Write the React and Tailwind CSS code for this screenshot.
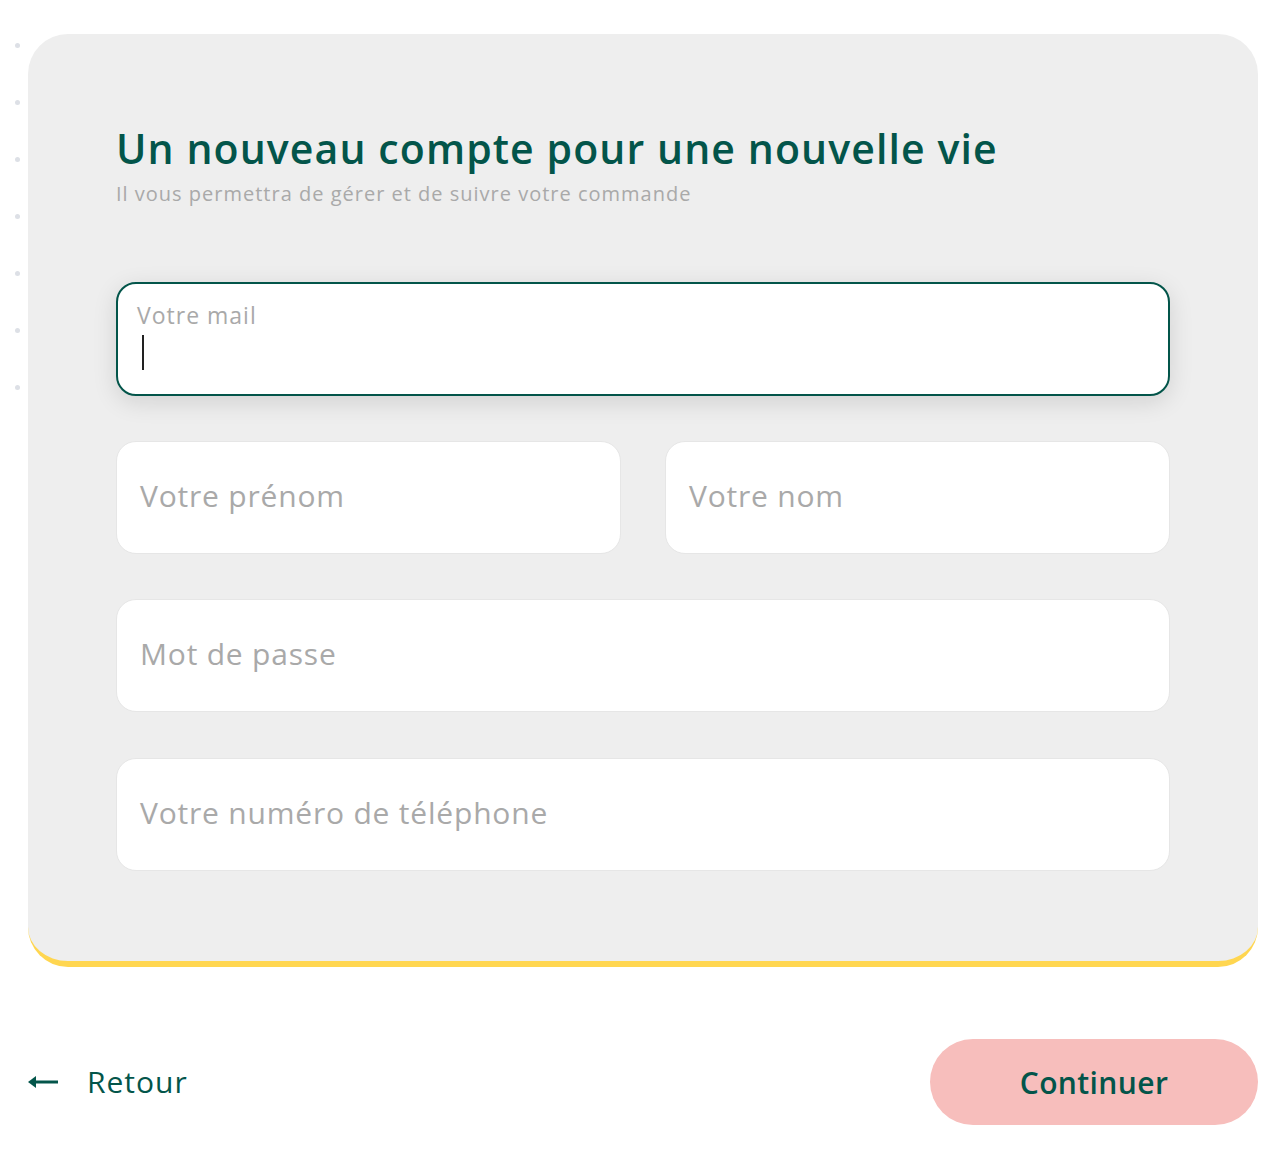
const Field = ({ placeholder, className = "" }) => {
  return (
    <div
      className={`h-[113px] rounded-[20px] bg-white border border-[#e6e6e6] flex items-center px-[23px] pb-[4px] ${className}`}
    >
      <span className="text-[30px] tracking-[0.8px] text-[#a9a9a9]">{placeholder}</span>
    </div>
  );
};

export default function App() {
  return (
    <div
      className="relative w-[1288px] h-[1170px] bg-white"
      style={{ fontFamily: "'Open Sans', 'Noto Sans', sans-serif" }}
    >
      {/* decorative dots */}
      <div className="absolute left-[15px] top-[43px] flex flex-col gap-[52px]">
        {[0, 1, 2, 3, 4, 5, 6].map((i) => (
          <span key={i} className="block w-[5px] h-[5px] rounded-full bg-[#dde0e6]" />
        ))}
      </div>

      <div className="pt-[34px] pl-[28px] pr-[30px]">
        {/* card */}
        <div className="rounded-[40px] bg-[#eeeeee] border-b-[6px] border-[#ffd650] px-[88px] pt-[87px] pb-[90px]">
          <h1 className="text-[41px] font-semibold tracking-[1.1px] text-[#03554a] leading-[54px]">
            Un nouveau compte pour une nouvelle vie
          </h1>
          <p className="text-[20px] tracking-[1px] text-[#a9a9a9] leading-[24px] mt-[7px]">
            Il vous permettra de gérer et de suivre votre commande
          </p>

          <div className="mt-[76px] h-[114px] rounded-[20px] bg-white border-2 border-[#03554a] shadow-[0_6px_24px_rgba(0,0,0,0.12)] px-[19px] pt-[16px]">
            <div className="text-[23px] tracking-[1px] text-[#a9a9a9] leading-[30px]">Votre mail</div>
            <div className="mt-[5px] ml-[5px] w-[2px] h-[35px] bg-[#222]" />
          </div>

          <div className="mt-[45px] grid grid-cols-2 gap-[44px]">
            <Field placeholder="Votre prénom" />
            <Field placeholder="Votre nom" />
          </div>

          <Field placeholder="Mot de passe" className="mt-[45px]" />
          <Field placeholder="Votre numéro de téléphone" className="mt-[46px]" />
        </div>

        {/* actions */}
        <div className="mt-[72px] flex items-center justify-between">
          <button className="flex items-center gap-[28px] text-[#03554a]">
            <svg width="31" height="14" viewBox="0 0 31 14" fill="none">
              <path d="M30 7H3" stroke="#03554a" strokeWidth="3" />
              <path d="M0 7L8 1V13Z" fill="#03554a" />
            </svg>
            <span className="text-[30px] tracking-[1px] leading-none">Retour</span>
          </button>
          <button className="w-[328px] h-[86px] rounded-full bg-[#f7bebc] text-[30px] tracking-[0.4px] font-semibold text-[#03554a]">
            Continuer
          </button>
        </div>
      </div>
    </div>
  );
}
